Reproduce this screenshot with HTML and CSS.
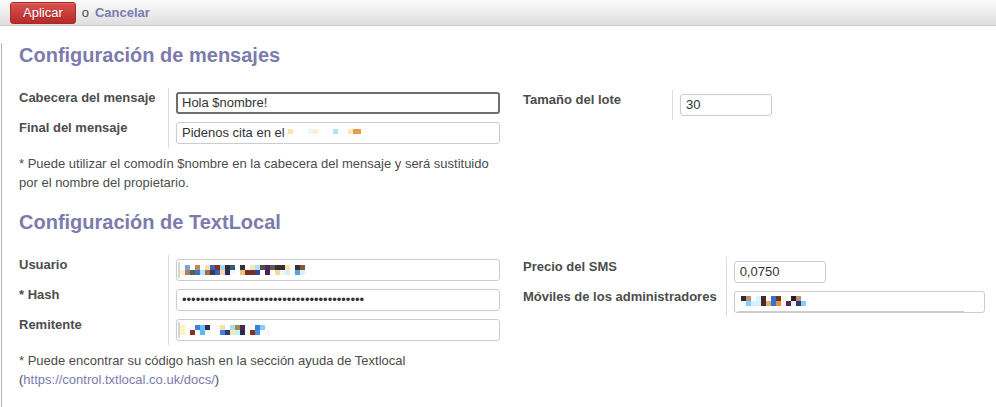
FILE: index.html
```html
<!DOCTYPE html>
<html lang="es">
<head>
<meta charset="utf-8">
<title>Configuración</title>
<link rel="stylesheet" href="styles.css">
</head>
<body>
<div class="topbar">
  <button class="btn-apply" type="button">Aplicar</button>
  <span class="or">o</span>
  <a class="cancel" href="#">Cancelar</a>
</div>
<div class="sheet">
  <h2 class="title">Configuración de mensajes</h2>
  <div class="section">
    <div class="col-left">
      <div class="group">
        <div class="label">Cabecera del mensaje</div>
        <div class="field"><div class="input focused">Hola $nombre!</div></div>
        <div class="label">Final del mensaje</div>
        <div class="field"><div class="input">Pidenos cita en el <span class="pix pix-final"></span></div></div>
      </div>
      <p class="note">* Puede utilizar el comodín $nombre en la cabecera del mensaje y será sustituido por el nombre del propietario.</p>
    </div>
    <div class="col-right">
      <div class="group">
        <div class="label">Tamaño del lote</div>
        <div class="field"><div class="input short">30</div></div>
      </div>
    </div>
  </div>

  <h2 class="title title-2">Configuración de TextLocal</h2>
  <div class="section">
    <div class="col-left">
      <div class="group">
        <div class="label">Usuario</div>
        <div class="field"><div class="input masked"><span class="caret"></span><span class="pix pix-user"></span></div></div>
        <div class="label">* Hash</div>
        <div class="field"><div class="input">••••••••••••••••••••••••••••••••••••••••</div></div>
        <div class="label">Remitente</div>
        <div class="field"><div class="input masked"><span class="caret"></span><span class="pix pix-sender"></span></div></div>
      </div>
      <p class="note">* Puede encontrar su código hash en la sección ayuda de Textlocal <span class="nowrap">(<a class="link" href="#">https://control.txtlocal.co.uk/docs/</a>)</span></p>
    </div>
    <div class="col-right">
      <div class="group">
        <div class="label">Precio del SMS</div>
        <div class="field"><div class="input short">0,0750</div></div>
        <div class="label">Móviles de los administradores</div>
        <div class="field"><div class="input tags"><span class="pix pix-phones"></span><span class="tag-line"></span></div></div>
      </div>
    </div>
  </div>
</div>
</body>
</html>
```

FILE: styles.css
```css
html, body {
  margin: 0;
  padding: 0;
}

body {
  font-family: "Liberation Sans", Arial, sans-serif;
  font-size: 13px;
  line-height: 1.428571;
  color: #4c4c4c;
  background: #ffffff;
}

/* top action bar */
.topbar {
  height: 23px;
  box-sizing: content-box;
  padding: 2px 0 0 10px;
  display: flex;
  align-items: flex-start;
  background: linear-gradient(#fcfcfc, #dedede);
  border-bottom: 1px solid #cacaca;
}

.btn-apply {
  height: 22px;
  padding: 0 12px;
  margin: 0;
  border: 1px solid #a52a26;
  border-radius: 3px;
  background: linear-gradient(#d9534f, #b8292a);
  color: #ffffff;
  font-family: inherit;
  font-size: 13px;
  line-height: 20px;
  text-shadow: 0 1px 1px rgba(0, 0, 0, 0.25);
  box-shadow: inset 0 1px 0 rgba(255, 255, 255, 0.15);
}

.or {
  margin-left: 6px;
  line-height: 22px;
  color: #4c4c4c;
}

.cancel {
  margin-left: 6px;
  line-height: 22px;
  color: #7c7bad;
  font-weight: bold;
  text-decoration: none;
}

/* sheet */
.sheet {
  margin-left: 1px;
  border-left: 1px solid #b4b4b4;
  padding: 0 11px 0 17px;
  min-height: calc(100vh - 26px);
}

.title {
  margin: 17px 0 0;
  font-size: 20px;
  line-height: 24px;
  font-weight: bold;
  color: #7c7bad;
}

.title-2 {
  margin-top: 18px;
}

.section {
  display: grid;
  grid-template-columns: 481px 1fr;
  column-gap: 23px;
  margin-top: 21px;
}

.col-right {
  padding-top: 2px;
}

.group {
  display: grid;
  grid-template-columns: minmax(149px, max-content) 1fr;
}

.label {
  font-weight: bold;
  padding: 1px 9px 0 0;
  white-space: nowrap;
}

.field {
  border-left: 1px solid #dddddd;
  padding: 4px 0 4px 7px;
}

.input {
  box-sizing: border-box;
  height: 22px;
  border: 1px solid #cccccc;
  border-radius: 3px;
  padding: 0 5px;
  line-height: 20px;
  color: #333333;
  background: #ffffff;
  white-space: nowrap;
  overflow: hidden;
}

.input.focused {
  border: 2px solid #6e6e6e;
  padding: 0 4px;
  line-height: 18px;
}

.input.short {
  width: 92px;
}

.input.masked {
  display: flex;
  align-items: center;
  padding-left: 1px;
}

.input.tags {
  display: flex;
  flex-direction: column;
  align-items: flex-start;
  padding: 4px 0 0 6px;
}

.caret {
  width: 2px;
  height: 16px;
  background: #d4d4d4;
}

.tag-line {
  display: block;
  width: 226px;
  height: 1px;
  margin: 5px 0 0 -3px;
  background: #cccccc;
}

.note {
  margin: 7px 0 0;
}

.nowrap {
  white-space: nowrap;
}

.link {
  color: #7c7bad;
  text-decoration: none;
}

/* masked (pixelated) values */
.pix {
  display: inline-block;
  height: 10px;
}

.pix-final {
  width: 73px;
  height: 5px;
  vertical-align: 3px;
  background: linear-gradient(to right,
    #fbe3b6 0 5px, transparent 5px 20px, #e6f8fc 20px 25px, #fcf0d0 25px 30px,
    transparent 30px 45px, #b0e4f8 45px 50px, transparent 50px 60px,
    #fce8b0 60px 65px, #e0a050 65px 73px);
}

.pix-user {
  width: 125px;
  background:
    linear-gradient(to right,
      transparent 0 5px, #7ba4d4 5px 10px, transparent 10px 15px, #c0875a 15px 20px,
      transparent 20px 25px, #f8deb0 25px 30px, #3f60c0 30px 35px, #7b3525 35px 40px,
      #a4d6ef 40px 45px, #303030 45px 50px, #2e5e78 50px 55px, transparent 55px 60px,
      #333333 60px 65px, transparent 65px 70px, #fbe3b6 70px 75px, #b2e0f2 75px 80px,
      #5c4c44 80px 85px, #4a2860 85px 90px, #5e5a4c 90px 95px, #3c2c34 95px 105px,
      #fde3a4 105px 110px, transparent 110px 115px, #333333 115px 120px, #8a5636 120px 125px)
      0 0 / 100% 5px no-repeat,
    linear-gradient(to right,
      #fdf0c8 0 5px, #b07a70 5px 10px, #4a6a40 10px 15px, #3a70d0 15px 20px,
      #b0e8f8 20px 25px, #a06a50 25px 30px, #3a3a4a 30px 35px, #3060c0 35px 40px,
      #f8d8a0 40px 45px, #203060 45px 50px, #f4f8fa 50px 55px, transparent 55px 60px,
      #f0c080 60px 65px, #7a3020 65px 75px, #2a4aa0 75px 80px, transparent 80px 85px,
      #4a2060 85px 90px, transparent 90px 95px, #fdd890 95px 100px, #eaf8fc 100px 105px,
      #d8f0f8 105px 110px, transparent 110px 115px, #5aa0e0 115px 120px, #d8f0f8 120px 125px)
      0 5px / 100% 5px no-repeat;
}

.pix-sender {
  width: 90px;
  background:
    linear-gradient(to right,
      #fdf5c0 0 5px, transparent 5px 15px, #3a80e0 15px 20px, #6ac0f0 20px 25px,
      #2a2a60 25px 30px, transparent 30px 35px, #f4fafc 35px 40px, #fce0a0 40px 45px,
      transparent 45px 50px, #a0e0f0 50px 55px, #a08a50 55px 60px, #4a2a4a 60px 65px,
      transparent 65px 75px, #3a80e0 75px 80px, #80d0f8 80px 85px, transparent 85px 90px)
      0 0 / 100% 5px no-repeat,
    linear-gradient(to right,
      #fdf5c0 0 5px, transparent 5px 10px, #8a3020 10px 15px, transparent 15px 20px,
      #60b8f0 20px 25px, transparent 25px 40px, #4080e0 40px 45px, #2a3a80 45px 50px,
      #fde6b0 50px 55px, #c0f0f8 55px 60px, #2a2a50 60px 65px, transparent 65px 70px,
      #8a3020 70px 75px, #4a90e0 75px 80px, transparent 80px 85px, #f4fbee 85px 90px)
      0 5px / 100% 5px no-repeat;
}

.pix-phones {
  width: 65px;
  background:
    linear-gradient(to right,
      #2a2a40 0 5px, #c09070 5px 10px, transparent 10px 15px, #d8f4fa 15px 20px,
      #4a2a20 20px 25px, transparent 25px 30px, #3a70d0 30px 35px, #6a3a20 35px 40px,
      #fcf4dc 40px 45px, transparent 45px 50px, #222222 50px 55px, #c09070 55px 60px,
      transparent 60px 65px)
      0 0 / 100% 5px no-repeat,
    linear-gradient(to right,
      #f4fafc 0 5px, #80d0f8 5px 10px, #d0f2fa 10px 20px, #4a2a20 20px 25px,
      #e0b070 25px 30px, #3a70d0 30px 35px, #e09040 35px 40px, #fcf4dc 40px 45px,
      #4a2a60 45px 50px, #f6ecd8 50px 55px, #2a3a7a 55px 60px, #80d0f8 60px 65px)
      0 5px / 100% 5px no-repeat;
}
```
